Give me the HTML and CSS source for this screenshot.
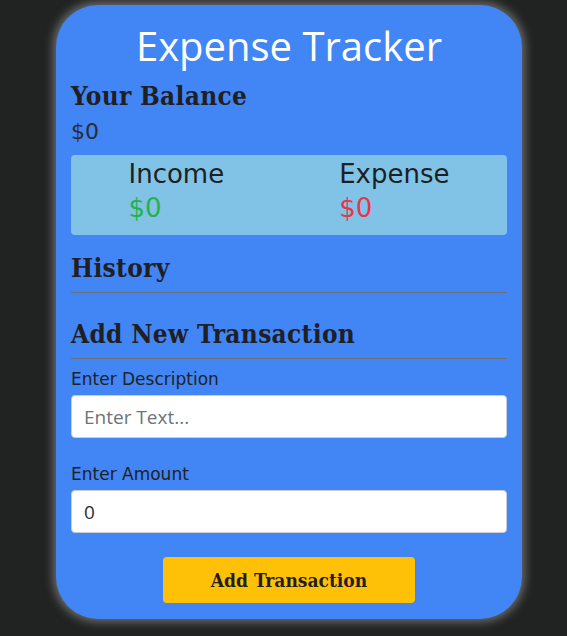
FILE: index.html
```html
<!DOCTYPE html>
<html lang="en">
<head>
<meta charset="utf-8">
<title>Expense Tracker</title>
<link rel="stylesheet" href="styles.css">
</head>
<body>
<div class="page">
  <main class="card">
    <h1 class="title">Expense Tracker</h1>
    <h2 class="heading balance-heading">Your Balance</h2>
    <div class="balance">$0</div>
    <div class="summary">
      <div class="summary-col">
        <div class="summary-label">Income</div>
        <div class="summary-value plus">$0</div>
      </div>
      <div class="summary-col">
        <div class="summary-label">Expense</div>
        <div class="summary-value minus">$0</div>
      </div>
    </div>
    <h2 class="heading history-heading">History</h2>
    <hr class="rule">
    <h2 class="heading add-heading">Add New Transaction</h2>
    <hr class="rule">
    <form class="form">
      <label class="field">
        <span class="field-label">Enter Description</span>
        <input class="input" type="text" placeholder="Enter Text...">
      </label>
      <label class="field">
        <span class="field-label">Enter Amount</span>
        <input class="input" type="text" value="0">
      </label>
      <div class="actions">
        <button class="btn" type="button">Add Transaction</button>
      </div>
    </form>
  </main>
</div>
</body>
</html>
```
FILE: styles.css
```css
* { box-sizing: border-box; }
html, body { margin: 0; padding: 0; }
body {
  background: #212322;
  height: 636px;
  overflow: hidden;
}
.page {
  display: flex;
  justify-content: flex-start;
  padding: 5px 0 0 56px;
}
.card {
  width: 466px;
  height: 614px;
  background: #4285f4;
  border-radius: 42px;
  box-shadow: 0 0 10px 3px rgba(170, 170, 170, 0.55);
  padding: 14px 15px 0 15px;
  display: flex;
  flex-direction: column;
}
.title {
  margin: 0;
  text-align: center;
  font-family: "Open Sans", sans-serif;
  font-weight: 400;
  font-size: 40px;
  line-height: 54px;
  color: #ffffff;
}
.heading {
  margin: 0;
  font-family: "DejaVu Serif", serif;
  font-stretch: condensed;
  font-weight: 700;
  font-size: 26px;
  line-height: 32px;
  letter-spacing: 0.3px;
  color: #1f1f24;
}
.balance-heading { margin-top: 7px; }
.balance {
  font-family: "DejaVu Sans", sans-serif;
  font-size: 22px;
  line-height: 28px;
  color: #2a2d33;
  margin-top: 6px;
  margin-bottom: 9px;
}
.summary {
  display: flex;
  justify-content: space-around;
  background: #80c3e7;
  border-radius: 4px;
  height: 80px;
  padding-top: 2px;
}
.summary-label {
  font-family: "DejaVu Sans", sans-serif;
  font-size: 26px;
  line-height: 34px;
  color: #1d1f22;
}
.summary-value {
  font-family: "DejaVu Sans", sans-serif;
  font-size: 26px;
  line-height: 34px;
}
.plus { color: #26b24a; }
.minus { color: #e8354a; }
.history-heading { margin-top: 17px; }
.add-heading { margin-top: 25px; }
.rule {
  margin: 8px 0 0;
  border: 0;
  border-top: 1px solid #6b6f78;
  height: 0;
}
.form {
  display: flex;
  flex-direction: column;
  padding-top: 10px;
}
.field {
  display: flex;
  flex-direction: column;
  margin-bottom: 26px;
}
.field:last-of-type { margin-bottom: 24px; }
.field-label {
  font-family: "DejaVu Sans", sans-serif;
  font-size: 17px;
  line-height: 20px;
  color: #1f2226;
  margin-bottom: 6px;
}
.input {
  height: 43px;
  width: 100%;
  border: 1px solid #c8cdd6;
  border-radius: 4px;
  background: #fff;
  padding: 0 12px;
  font-family: "Open Sans", sans-serif;
  font-size: 19px;
  color: #2a2d33;
  outline: none;
}
.input::placeholder { color: #6c737b; }
.actions {
  display: flex;
  justify-content: center;
}
.btn {
  width: 252px;
  height: 46px;
  border: 0;
  border-radius: 4px;
  background: #ffc107;
  font-family: "DejaVu Serif", serif;
  font-stretch: condensed;
  font-weight: 700;
  font-size: 19px;
  color: #1f1f24;
}
```
